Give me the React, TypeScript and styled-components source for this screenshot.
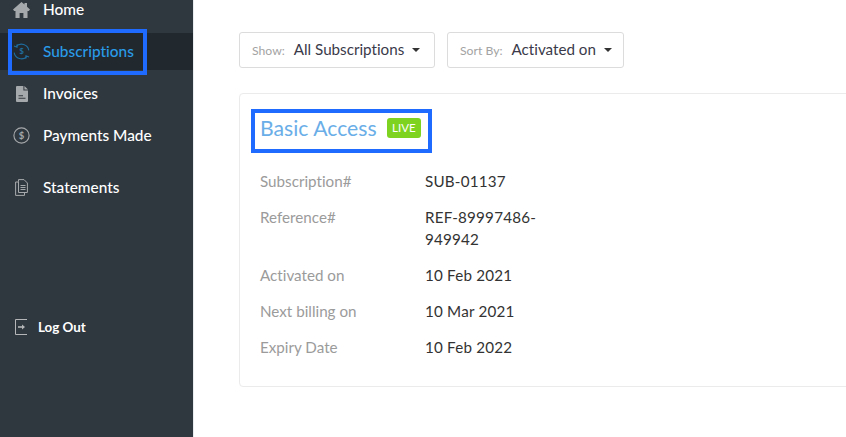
import React from "react";
import styled, { createGlobalStyle } from "styled-components";

const Global = createGlobalStyle`
  html, body { margin: 0; padding: 0; height: 100%; background: #fff; overflow: hidden; }
  body { font-family: Lato, "Noto Sans", sans-serif; font-variant-ligatures: none; }
  #root { height: 100%; }
`;
const Page = styled.div`
  display: flex;
  width: 846px;
  height: 437px;
  overflow: hidden;
`;
const Sidebar = styled.nav`
  position: relative;
  flex: 0 0 193px;
  background: #30383f;
  display: flex;
  flex-direction: column;
  border-right: 1px solid #e9ecef;
`;
const Menu = styled.ul`
  list-style: none;
  margin: -9px 0 0;
  padding: 0;
  display: flex;
  flex-direction: column;
  gap: 5px;
`;
const Item = styled.li<{ $active?: boolean; $spaced?: boolean }>`
  height: 37px;
  display: flex;
  align-items: center;
  padding-left: 12px;
  gap: 12px;
  margin-top: ${(p) => (p.$spaced ? "10px" : "0")};
  background: ${(p) => (p.$active ? "#21282e" : "transparent")};
  color: ${(p) => (p.$active ? "#2a9be8" : "#fff")};
  font-size: 15.4px;
  font-weight: 500;
`;
const ItemLabel = styled.span`
  margin-bottom: 2px;
`;
const IconSlot = styled.span<{ $active?: boolean }>`
  width: 19px;
  height: 19px;
  display: flex;
  align-items: center;
  justify-content: center;
  flex: none;
  color: ${(p) => (p.$active ? "#1f6d9e" : "#a6a9ab")};
`;
const LogOut = styled.div`
  margin-top: 111px;
  display: flex;
  align-items: center;
  padding-left: 15px;
  gap: 11px;
  color: #fff;
  font-size: 13.4px;
  font-weight: 700;
  height: 20px;
`;
const Main = styled.main`
  flex: 1;
  min-width: 0;
  padding: 32px 0 0 45px;
  display: flex;
  flex-direction: column;
`;
const Filters = styled.div`
  display: flex;
  gap: 12px;
`;
const Filter = styled.div<{ $width: number }>`
  width: ${(p) => p.$width}px;
  height: 36px;
  box-sizing: border-box;
  display: flex;
  align-items: center;
  padding: 0 12px;
  border: 1px solid #dcdcdc;
  border-radius: 3px;
  color: #3a3a4a;
  font-size: 15.2px;
  white-space: nowrap;
`;
const FilterText = styled.span`
  margin-bottom: 2px;
`;
const FilterLabel = styled.span`
  color: #a3a3a3;
  font-size: 12.2px;
  margin-right: 9px;
`;
const Caret = styled.span`
  flex: none;
  margin-left: 8px;
  width: 0;
  height: 0;
  border-left: 4px solid transparent;
  border-right: 4px solid transparent;
  border-top: 4px solid #333;
`;
const Card = styled.section`
  position: relative;
  margin-top: 25px;
  width: 640px;
  height: 294px;
  box-sizing: border-box;
  border: 1px solid #ebebeb;
  border-radius: 4px;
  padding: 20px 0 0 20px;
`;
const TitleRow = styled.div`
  display: flex;
  align-items: center;
  gap: 10px;
  height: 28px;
`;
const Title = styled.h2`
  margin: 0;
  color: #6aaee8;
  font-size: 21.2px;
  font-weight: 400;
`;
const Badge = styled.span`
  background: #7ed321;
  color: #fff;
  font-size: 11.5px;
  line-height: 20px;
  height: 20px;
  padding: 0 5.5px;
  border-radius: 3px;
`;
const Details = styled.dl`
  display: grid;
  grid-template-columns: 165px 118px;
  row-gap: 14px;
  margin: 28px 0 0;
  font-size: 15.2px;
  line-height: 22px;
`;
const Term = styled.dt`
  color: #9b9b9b;
`;
const Value = styled.dd`
  margin: 0;
  color: #333;
  letter-spacing: 0.2px;
`;
const Highlight = styled.div`
  position: absolute;
  box-sizing: border-box;
  border: 4px solid #1f6bff;
  pointer-events: none;
`;
const SubHighlight = styled(Highlight)`
  left: 8px;
  top: 29px;
  width: 139px;
  height: 46px;
`;
const TitleHighlight = styled(Highlight)`
  left: 11px;
  top: 15px;
  width: 181px;
  height: 44px;
`;

const Home = () => (
  <svg width="17" height="16" viewBox="0 0 17 16" fill="currentColor">
    <path d="M8.5 0 L11.5 2.6 V1 H14 V4.8 L17 7.6 L15.8 9 H14.5 V16 H10.4 V11 H6.6 V16 H2.5 V9 H1.2 L0 7.6 Z" />
  </svg>
);
const Sync = () => (
  <svg width="17" height="17" viewBox="0 0 17 17" fill="none" stroke="currentColor" strokeWidth="1.1">
    <path d="M3 3.6 A7.4 7.4 0 0 1 15.8 7.4" />
    <path d="M14 13.4 A7.4 7.4 0 0 1 1.2 9.6" />
    <path d="M1 3 L4 4.2 L4.2 1.2" />
    <path d="M16 14 L13 12.8 L12.8 15.8" />
    <text x="8.5" y="11.4" fontSize="8" fontWeight="700" textAnchor="middle" fill="currentColor" stroke="none">$</text>
  </svg>
);
const Invoice = () => (
  <svg width="12" height="16" viewBox="0 0 12 16" fill="currentColor">
    <path d="M0 1 A1 1 0 0 1 1 0 H7.4 V4.6 H12 V15 A1 1 0 0 1 11 16 H1 A1 1 0 0 1 0 15 Z M8.4 0 L12 3.6 H8.4 Z M2.5 9.2 V10.2 H7 V9.2 Z M2.5 11.8 V12.8 H9.5 V11.8 Z" fillRule="evenodd" />
  </svg>
);
const Dollar = () => (
  <svg width="17" height="17" viewBox="0 0 17 17" fill="none" stroke="currentColor" strokeWidth="1.1">
    <circle cx="8.5" cy="8.5" r="7.6" />
    <text x="8.5" y="11.8" fontSize="9.5" fontWeight="700" textAnchor="middle" fill="currentColor" stroke="none">$</text>
  </svg>
);
const Statement = () => (
  <svg width="13" height="17" viewBox="0 0 13 17" fill="none" stroke="currentColor" strokeWidth="1">
    <path d="M3.5 2.5 V0.6 H9 L12.4 4 V13.5 H3.5 Z" />
    <path d="M3.5 3 H0.6 V16.4 H9.5 V13.5" />
    <path d="M5.5 6.5 H10.5 M5.5 8.5 H10.5 M5.5 10.5 H10.5" />
  </svg>
);
const Exit = () => (
  <svg width="12" height="16" viewBox="0 0 12 16" fill="none" stroke="#b4b6b8" strokeWidth="1">
    <path d="M12 .5 H.5 V15.5 H12" />
    <path d="M3 8 H9" strokeWidth="1.6" />
    <path d="M7 5.4 L10 8 L7 10.6 Z" fill="#b4b6b8" stroke="none" />
  </svg>
);

export default function App() {
  return (
    <Page>
      <Global />
      <Sidebar>
        <Menu>
          <Item><IconSlot><Home /></IconSlot><ItemLabel>Home</ItemLabel></Item>
          <Item $active><IconSlot $active><Sync /></IconSlot><ItemLabel>Subscriptions</ItemLabel></Item>
          <Item><IconSlot><Invoice /></IconSlot><ItemLabel>Invoices</ItemLabel></Item>
          <Item><IconSlot><Dollar /></IconSlot><ItemLabel>Payments Made</ItemLabel></Item>
          <Item $spaced><IconSlot><Statement /></IconSlot><ItemLabel>Statements</ItemLabel></Item>
        </Menu>
        <LogOut><Exit />Log Out</LogOut>
        <SubHighlight />
      </Sidebar>
      <Main>
        <Filters>
          <Filter $width={196}><FilterLabel>Show:</FilterLabel><FilterText>All Subscriptions</FilterText><Caret /></Filter>
          <Filter $width={177}><FilterLabel>Sort By:</FilterLabel><FilterText>Activated on</FilterText><Caret /></Filter>
        </Filters>
        <Card>
          <TitleRow><Title>Basic Access</Title><Badge>LIVE</Badge></TitleRow>
          <Details>
            <Term>Subscription#</Term><Value>SUB-01137</Value>
            <Term>Reference#</Term><Value>REF-89997486-949942</Value>
            <Term>Activated on</Term><Value>10 Feb 2021</Value>
            <Term>Next billing on</Term><Value>10 Mar 2021</Value>
            <Term>Expiry Date</Term><Value>10 Feb 2022</Value>
          </Details>
          <TitleHighlight />
        </Card>
      </Main>
    </Page>
  );
}
